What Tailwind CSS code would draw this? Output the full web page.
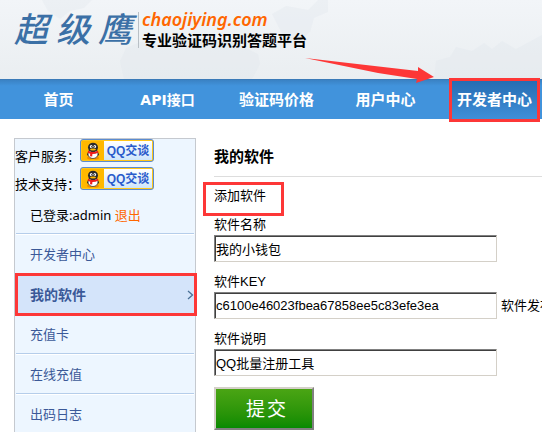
<!DOCTYPE html>
<html lang="zh-CN">
<head>
  <meta charset="UTF-8">
  <meta name="viewport" content="width=device-width, initial-scale=1">
  <title>我的软件 - 超级鹰</title>
  <script src="https://cdn.jsdelivr.net/npm/@tailwindcss/browser@4"></script>
</head>
<body class="relative h-screen overflow-hidden bg-white font-['Liberation_Sans','Noto_Sans_CJK_SC',sans-serif] text-[13px] leading-5 text-black">

<!-- 顶部 -->
<header class="relative flex h-[79px] items-start overflow-hidden bg-linear-to-b from-[#f2f5f8] to-[#eaeef1] pt-2 pl-[14px]">
  <svg class="absolute inset-0 h-full w-full" viewBox="0 0 542 79" preserveAspectRatio="xMinYMin slice" fill="#dfe5ea" fill-opacity=".3" aria-hidden="true">
    <path d="M42 0h50l-8 8-14 3-10 8-12-8zM126 48l14-6 30 4 24-8 36 2 28 14 2 10-8 15H124l-4-18z"/>
    <path d="M272 14l14-8 22 4 10-10h10v12l-14 6-4 14-14 12-10-4-8-14z"/>
    <path d="M434 79l2-18 14-4 6-10 16 4 12-8 8 6 10-8 14 8 26-14v44z"/>
  </svg>
  <a href="#" class="relative flex items-start">
    <span class="flex gap-2 pr-[6px] text-[34px] leading-[44px] font-medium text-[#3b70a6] italic"><span>超</span><span>级</span><span>鹰</span></span>
    <span class="mt-1 h-9 border-l border-[#b9c0c6]"></span>
    <span class="flex flex-col pl-[3px]">
      <span class="font-['Noto_Sans',sans-serif] text-[18px] leading-[22px] font-semibold text-[#ff6600] italic">chaojiying.com</span>
      <span class="text-[15px] leading-[22px] font-bold">专业验证码识别答题平台</span>
    </span>
  </a>
</header>

<!-- 导航 -->
<nav class="border-t border-[#3a7ab8] bg-linear-to-b from-[#3a82c4] to-[#4193dc] to-15% pl-1">
  <ul class="flex h-[39px] text-[15px] font-bold text-white">
    <li class="flex w-[109px] shrink-0 justify-center"><a href="#" class="flex items-center px-2">首页</a></li>
    <li class="flex w-[109px] shrink-0 justify-center"><a href="#" class="flex items-center px-2 font-['DejaVu_Sans','Noto_Sans_CJK_SC',sans-serif] text-[14px]">API接口</a></li>
    <li class="flex w-[109px] shrink-0 justify-center"><a href="#" class="flex items-center px-2">验证码价格</a></li>
    <li class="flex w-[109px] shrink-0 justify-center"><a href="#" class="flex items-center px-2">用户中心</a></li>
    <li class="flex w-[109px] shrink-0 justify-center">
      <a href="#" class="relative flex items-center bg-linear-to-b from-[#266cb2] to-[#3f8fd8] px-2">
        开发者中心
        <span class="absolute inset-x-0 -top-0.5 -bottom-[3px] border-3 border-[#fd3737]"></span>
      </a>
    </li>
  </ul>
</nav>

<div class="flex gap-[18px] pt-[19px] pl-[14px]">
  <!-- 侧栏 -->
  <aside class="w-[182px] shrink-0 border border-[#c5c9cf] bg-[#edf6ff]">
    <div class="flex h-7 items-start">
      <span class="w-[65px] pt-2">客户服务：</span>
      <button type="button" class="flex h-[23px] w-[74px] overflow-hidden rounded-[3px] border border-[#5b8bd0] bg-[#ffc61a] p-px">
        <span class="flex h-full w-[22px] shrink-0 items-center justify-center bg-[#ffb800]">
          <svg class="h-[18px] w-[18px]" viewBox="0 0 18 18" aria-hidden="true">
            <path d="M3 13L5 8h8l2 5-2 1H5z" fill="#222"/>
            <ellipse cx="6" cy="16" rx="3" ry="1.4" fill="#f08a00"/>
            <ellipse cx="12" cy="16" rx="3" ry="1.4" fill="#f08a00"/>
            <ellipse cx="9" cy="12" rx="5" ry="4.5" fill="#fff" stroke="#222" stroke-width=".7"/>
            <ellipse cx="9" cy="5.5" rx="5" ry="4.8" fill="#2b2b2b"/>
            <ellipse cx="7.2" cy="4.6" rx="1.3" ry="1.7" fill="#fff"/>
            <ellipse cx="10.8" cy="4.6" rx="1.3" ry="1.7" fill="#fff"/>
            <circle cx="7.5" cy="4.8" r=".6"/><circle cx="10.5" cy="4.8" r=".6"/>
            <ellipse cx="9" cy="7.6" rx="3" ry="1" fill="#ffb800"/>
            <path d="M4 8.8q5 2.6 10 0l.4 1.8q-3 1.6-6 1.5l-.2 2.4-2.200-.3.2-2.500-2.400-1z" fill="#ee1c1c"/>
          </svg>
        </span>
        <span class="flex h-full grow items-center justify-center bg-linear-to-b from-white to-[#cfe6fb] text-[12px] font-bold text-[#2a5bcb]">QQ交谈</span>
      </button>
    </div>
    <div class="flex h-7 items-start">
      <span class="w-[65px] pt-2">技术支持：</span>
      <button type="button" class="flex h-[23px] w-[74px] overflow-hidden rounded-[3px] border border-[#5b8bd0] bg-[#ffc61a] p-px">
        <span class="flex h-full w-[22px] shrink-0 items-center justify-center bg-[#ffb800]">
          <svg class="h-[18px] w-[18px]" viewBox="0 0 18 18" aria-hidden="true">
            <path d="M3 13L5 8h8l2 5-2 1H5z" fill="#222"/>
            <ellipse cx="6" cy="16" rx="3" ry="1.4" fill="#f08a00"/>
            <ellipse cx="12" cy="16" rx="3" ry="1.4" fill="#f08a00"/>
            <ellipse cx="9" cy="12" rx="5" ry="4.5" fill="#fff" stroke="#222" stroke-width=".7"/>
            <ellipse cx="9" cy="5.5" rx="5" ry="4.8" fill="#2b2b2b"/>
            <ellipse cx="7.2" cy="4.6" rx="1.3" ry="1.7" fill="#fff"/>
            <ellipse cx="10.8" cy="4.6" rx="1.3" ry="1.7" fill="#fff"/>
            <circle cx="7.5" cy="4.8" r=".6"/><circle cx="10.5" cy="4.8" r=".6"/>
            <ellipse cx="9" cy="7.6" rx="3" ry="1" fill="#ffb800"/>
            <path d="M4 8.8q5 2.6 10 0l.4 1.8q-3 1.6-6 1.5l-.2 2.4-2.200-.3.2-2.500-2.400-1z" fill="#ee1c1c"/>
          </svg>
        </span>
        <span class="flex h-full grow items-center justify-center bg-linear-to-b from-white to-[#cfe6fb] text-[12px] font-bold text-[#2a5bcb]">QQ交谈</span>
      </button>
    </div>
    <p class="flex h-[38px] items-center pt-0.5 pl-[15px] font-['Noto_Sans','Noto_Sans_CJK_SC',sans-serif]">已登录:admin&nbsp;<a href="#" class="text-[#ff6600]">退出</a></p>
    <ul class="px-px text-[#3b5998]">
      <li class="h-10 border-t border-[#b5cdea]"><a href="#" class="flex h-full items-center border-t border-white pt-0.5 pl-[14px]">开发者中心</a></li>
      <li class="relative h-10 border-t border-[#b5cdea]">
        <a href="#" class="flex h-full items-center justify-between bg-[#d4e4fa] pt-0.5 pl-[14px] text-[14px] font-bold">
          我的软件
          <svg class="h-[10px] w-[7px]" viewBox="0 0 7 10" fill="none" stroke="#4a7096" stroke-width="1.3" aria-hidden="true"><path d="M1 1l4.500 4L1 9"/></svg>
        </a>
        <span class="absolute -top-px -right-[3px] -bottom-[3px] -left-px border-3 border-[#fd3737]"></span>
      </li>
      <li class="h-10 border-t border-[#b5cdea]"><a href="#" class="flex h-full items-center border-t border-white pt-0.5 pl-[14px]">充值卡</a></li>
      <li class="h-10 border-t border-[#b5cdea]"><a href="#" class="flex h-full items-center border-t border-white pt-0.5 pl-[14px]">在线充值</a></li>
      <li class="h-10 border-t border-[#b5cdea]"><a href="#" class="flex h-full items-center border-t border-white pt-0.5 pl-[14px]">出码日志</a></li>
    </ul>
  </aside>

  <!-- 内容 -->
  <main class="min-w-0 grow">
    <h1 class="h-[39px] border-b border-[#dddddd] pt-[9px] text-[15px] font-bold">我的软件</h1>
    <p class="relative mt-[9px]">
      <a href="#">添加软件</a>
      <span class="absolute -top-1 -left-[11px] h-[34px] w-[81px] border-3 border-[#fd3737]"></span>
    </p>
    <form class="mt-[9px]" onsubmit="return false">
      <label for="soft_name" class="block">软件名称</label>
      <input id="soft_name" type="text" value="我的小钱包" class="block h-[27px] w-[283px] border border-t-[#808080] border-r-[#d4d0c8] border-b-[#d4d0c8] border-l-[#808080] bg-white px-px shadow-[inset_1px_1px_#404040] outline-none">
      <label for="soft_key" class="mt-[10px] block">软件KEY</label>
      <div class="flex items-center gap-1 whitespace-nowrap">
        <input id="soft_key" type="text" value="c6100e46023fbea67858ee5c83efe3ea" class="block h-[27px] w-[283px] shrink-0 border border-t-[#808080] border-r-[#d4d0c8] border-b-[#d4d0c8] border-l-[#808080] bg-white px-px shadow-[inset_1px_1px_#404040] outline-none">
        <span>软件发布</span>
      </div>
      <label for="soft_desc" class="mt-[10px] block">软件说明</label>
      <input id="soft_desc" type="text" value="QQ批量注册工具" class="block h-[27px] w-[283px] border border-t-[#808080] border-r-[#d4d0c8] border-b-[#d4d0c8] border-l-[#808080] bg-white px-px shadow-[inset_1px_1px_#404040] outline-none">
      <button type="submit" class="mt-[11px] flex h-[43px] w-[100px] items-center justify-center gap-0.5 border-2 border-t-[#d4d0c8] border-r-[#808080] border-b-[#808080] border-l-[#d4d0c8] bg-linear-to-b from-[#4aa514] to-[#058a02] pt-0.5 pl-1 text-[19px] text-white"><span>提</span><span>交</span></button>
    </form>
  </main>
</div>

<!-- 指向开发者中心的箭头 -->
<svg class="pointer-events-none absolute top-[55px] left-[304px] h-[30px] w-[132px]" viewBox="0 0 132 30" fill="#fd3737" aria-hidden="true">
  <path d="M1 3L114 16V12L130 22L112 28L113 24L74 18z"/>
</svg>
</body>
</html>
